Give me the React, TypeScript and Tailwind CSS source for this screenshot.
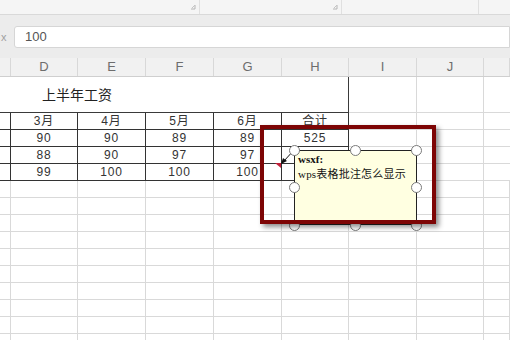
const cols = 'grid grid-cols-[11px_67px_68px_68px_68px_67px_68px_67px_1fr]';
const letters = ['', 'D', 'E', 'F', 'G', 'H', 'I', 'J', ''];

const table = [
  ['', '3月', '4月', '5月', '6月', '合计'],
  ['', '90', '90', '89', '89', '525'],
  ['', '88', '90', '97', '97', ''],
  ['', '99', '100', '100', '100', ''],
];

const cellFont = { fontFamily: '"Liberation Sans", "Noto Sans CJK SC", sans-serif' };

function Handle({ x, y }: { x: number; y: number }) {
  return (
    <div
      className="absolute w-[11px] h-[11px] rounded-full bg-white border border-[#7a7a7a]"
      style={{ left: x - 5.5, top: y - 5.5 }}
    />
  );
}

function Corner() {
  return (
    <svg width="6" height="6" viewBox="0 0 6 6" className="mt-[4px]">
      <path d="M1 5 H5 V1" stroke="#b5b5b5" strokeWidth="1" fill="none" />
      <path d="M2 4 L5 1" stroke="#c5c5c5" strokeWidth="1" />
    </svg>
  );
}

export default function App() {
  return (
    <div className="relative w-[510px] h-[340px] overflow-hidden bg-white" style={cellFont}>
      {/* ribbon bottom */}
      <div className="h-[15px] bg-[#f5f5f5] border-b border-[#d9d9d9] flex">
        <div className="w-[200px] border-r border-[#e0e0e0] flex justify-end pr-[3px]">
          <Corner />
        </div>
        <div className="w-[142px] border-r border-[#e0e0e0] flex justify-end pr-[3px]">
          <Corner />
        </div>
        <div className="w-[137px] border-r border-[#e0e0e0]" />
        <div className="flex-1" />
      </div>

      {/* formula bar */}
      <div className="h-[43px] bg-[#ececec] pt-[11px] flex items-start">
        <div className="w-[14px] text-[11px] leading-[22px] text-[#a0a0a0] pl-[1px]">x</div>
        <div className="flex-1 h-[22px] bg-white border border-[#d6d6d6] rounded-l-[3px] pl-[10px] text-[13px] leading-[20px] text-[#555]">
          100
        </div>
      </div>

      {/* column headers */}
      <div className={`${cols} h-[19px] bg-[#f1f1f1] border-b border-[#cfcfcf]`}>
        {letters.map((l, i) => (
          <div
            key={i}
            className="border-r border-[#d8d8d8] text-center text-[13px] leading-[18px] text-[#6d6d6d]"
          >
            {l}
          </div>
        ))}
      </div>

      {/* row 1 - merged title */}
      <div className={`${cols} h-[36px]`}>
        <div className="col-span-6 border-r border-b border-[#3a3a3a] pl-[42px] pt-[9px] text-[14px] leading-[18px] text-[#222]">
          上半年工资
        </div>
        <div className="border-r border-b border-[#d9d9d9]" />
        <div className="border-r border-b border-[#d9d9d9]" />
        <div className="border-b border-[#d9d9d9]" />
      </div>

      {/* salary table */}
      {table.map((row, r) => (
        <div key={r} className={`${cols} h-[17px]`}>
          {row.map((v, c) => (
            <div
              key={c}
              className="border-r border-b border-[#333] text-center text-[12px] leading-[16px] tracking-[0.8px] text-[#333]"
            >
              {v}
            </div>
          ))}
          <div className="border-r border-b border-[#d9d9d9]" />
          <div className="border-r border-b border-[#d9d9d9]" />
          <div className="border-b border-[#d9d9d9]" />
        </div>
      ))}

      {/* empty rows */}
      {Array.from({ length: 10 }).map((_, r) => (
        <div key={r} className={`${cols} h-[17px]`}>
          {letters.map((_, c) => (
            <div key={c} className="border-r border-b border-[#d9d9d9]" />
          ))}
        </div>
      ))}

      {/* comment indicator */}
      <svg className="absolute left-[275px] top-[163px]" width="7" height="6" viewBox="0 0 7 6">
        <polygon points="0,0 6,0 6,5" fill="#c0203a" />
      </svg>

      {/* connector arrow */}
      <svg className="absolute left-[278px] top-[147px]" width="18" height="20" viewBox="0 0 18 20">
        <line x1="16" y1="3" x2="6" y2="14" stroke="#111" strokeWidth="1" />
        <polygon points="3,17 5,11 9,14" fill="#111" />
      </svg>

      {/* comment box */}
      <div className="absolute left-[294px] top-[150px] w-[123px] h-[75px] bg-[#ffffe1] border border-[#222] pl-[3px] pt-[1px]">
        <div
          className="text-[11px] leading-[14px] font-bold text-[#111]"
          style={{ fontFamily: '"Liberation Serif", "Noto Sans CJK SC", serif' }}
        >
          wsxf:
        </div>
        <div
          className="text-[11px] leading-[16px] text-[#111] whitespace-nowrap tracking-[0.2px]"
          style={{ fontFamily: '"Liberation Serif", "Noto Sans CJK SC", serif' }}
        >
          wps表格批注怎么显示
        </div>
      </div>
      <Handle x={294} y={150} />
      <Handle x={355} y={150} />
      <Handle x={416} y={150} />
      <Handle x={294} y={187} />
      <Handle x={416} y={187} />
      <Handle x={294} y={225} />
      <Handle x={355} y={225} />
      <Handle x={416} y={225} />

      {/* red highlight frame */}
      <div className="absolute left-[260px] top-[125px] w-[176px] h-[99px] border-[4px] border-[#7d0505] shadow-[3px_3px_5px_rgba(0,0,0,0.45)]" />
    </div>
  );
}
